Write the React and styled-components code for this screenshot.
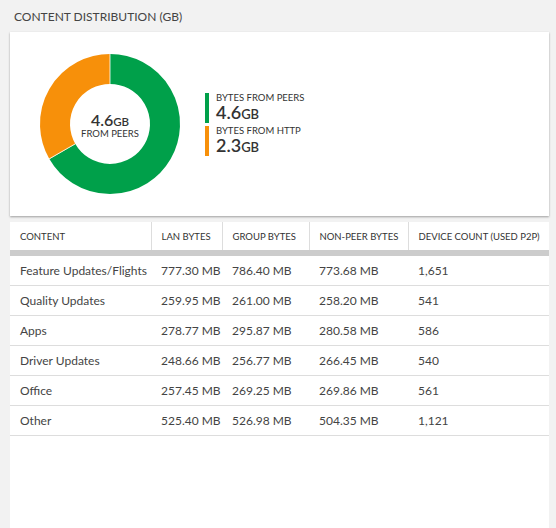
import React from 'react'
import styled, { createGlobalStyle } from 'styled-components'

const Global = createGlobalStyle`
  body { margin: 0; background: #f2f2f2; font-family: "Segoe UI", Lato, "Noto Sans", sans-serif; color: #333; }
`

const rows = [
  ['Feature Updates/Flights', '777.30 MB', '786.40 MB', '773.68 MB', '1,651'],
  ['Quality Updates', '259.95 MB', '261.00 MB', '258.20 MB', '541'],
  ['Apps', '278.77 MB', '295.87 MB', '280.58 MB', '586'],
  ['Driver Updates', '248.66 MB', '256.77 MB', '266.45 MB', '540'],
  ['Office', '257.45 MB', '269.25 MB', '269.86 MB', '561'],
  ['Other', '525.40 MB', '526.98 MB', '504.35 MB', '1,121'],
]
const heads = ['CONTENT', 'LAN BYTES', 'GROUP BYTES', 'NON-PEER BYTES', 'DEVICE COUNT (USED P2P)']
const widths = [141, 71, 87, 99, 141]

function arc (cx, cy, r, a0, a1) {
  const p = a => [cx + r * Math.sin(a * Math.PI / 180), cy - r * Math.cos(a * Math.PI / 180)]
  const [x0, y0] = p(a0)
  const [x1, y1] = p(a1)
  return `M${x0} ${y0} A${r} ${r} 0 ${a1 - a0 > 180 ? 1 : 0} 1 ${x1} ${y1}`
}

export default function App () {
  return <Page>
    <Global />
    <Title>CONTENT DISTRIBUTION (GB)</Title>
    <ChartCard>
      <Donut>
        <svg width='142' height='142' viewBox='0 0 142 142'>
          <path d={arc(71, 71, 55, 0, 240)} stroke='#00a04a' strokeWidth='30' fill='none' />
          <path d={arc(71, 71, 55, 240, 360)} stroke='#f7900a' strokeWidth='30' fill='none' />
          <line x1='71' y1='1' x2='71' y2='31' stroke='#fff' strokeWidth='0.8' />
          <line x1='10' y1='106' x2='36' y2='91' stroke='#fff' strokeWidth='0.8' />
        </svg>
        <Center>
          <Big>4.6<small>GB</small></Big>
          <span>FROM PEERS</span>
        </Center>
      </Donut>
      <Legend>
        <Item color='#00a04a'><Label>BYTES FROM PEERS</Label><Value>4.6<small>GB</small></Value></Item>
        <Item color='#f7900a'><Label>BYTES FROM HTTP</Label><Value>2.3<small>GB</small></Value></Item>
      </Legend>
    </ChartCard>
    <TableCard>
      <Table>
        <colgroup>{widths.map((w, i) => <col key={i} style={{ width: w }} />)}</colgroup>
        <thead>
          <tr>{heads.map((h, i) => <Th key={h} last={i === heads.length - 1}>{h}</Th>)}</tr>
        </thead>
        <tbody>
          {rows.map(r => <tr key={r[0]}>{r.map((c, i) => <Td key={i}>{c}</Td>)}</tr>)}
        </tbody>
      </Table>
    </TableCard>
  </Page>
}

const Page = styled.div`
  height: 528px;
  width: 556px;
  padding: 0 7px 0 10px;
  display: flex;
  flex-direction: column;
  box-sizing: border-box;
`
const Title = styled.div`
  font-size: 12px;
  padding: 9px 4px 0;
  height: 23px;
  color: #444;
`
const ChartCard = styled.div`
  background: #fff;
  height: 184px;
  display: flex;
  align-items: center;
  padding-left: 29px;
  box-shadow: 0 1px 2px rgba(0,0,0,0.35);
`
const Donut = styled.div`
  position: relative;
  width: 142px;
  height: 142px;
  svg { display: block; }
`
const Center = styled.div`
  position: absolute;
  inset: 0;
  display: flex;
  flex-direction: column;
  align-items: center;
  justify-content: center;
  font-size: 9.5px;
  span { margin-top: -1px; }
`
const Big = styled.div`
  font-size: 16px;
  font-weight: 600;
  small { font-size: 11.5px; }
`
const Legend = styled.div`
  margin-left: 24px;
  display: flex;
  flex-direction: column;
  gap: 3px;
  margin-top: 0;
`
const Item = styled.div`
  border-left: 4px solid ${p => p.color};
  padding-left: 7px;
  height: 30px;
  display: flex;
  flex-direction: column;
  justify-content: center;
`
const Label = styled.div`
  font-size: 9.5px;
  line-height: 11px;
`
const Value = styled.div`
  font-size: 18px;
  font-weight: 600;
  line-height: 19px;
  small { font-size: 13px; }
`
const TableCard = styled.div`
  flex: 1;
  background: #fff;
  margin-top: 6px;
`
const Table = styled.table`
  width: 539px;
  table-layout: fixed;
  border-collapse: collapse;
  font-size: 12px;
`
const Th = styled.th`
  text-align: left;
  font-weight: 400;
  font-size: 9.5px;
  height: 28px;
  padding: 0 0 0 10px;
  border-right: ${p => p.last ? 'none' : '1px solid #ddd'};
  border-bottom: 6px solid #cccccc;
  white-space: nowrap;
  overflow: hidden;
`
const Td = styled.td`
  height: 29px;
  padding: 0 0 0 10px;
  border-bottom: 1px solid #ddd;
  white-space: nowrap;
  overflow: hidden;
  color: #444;
`
